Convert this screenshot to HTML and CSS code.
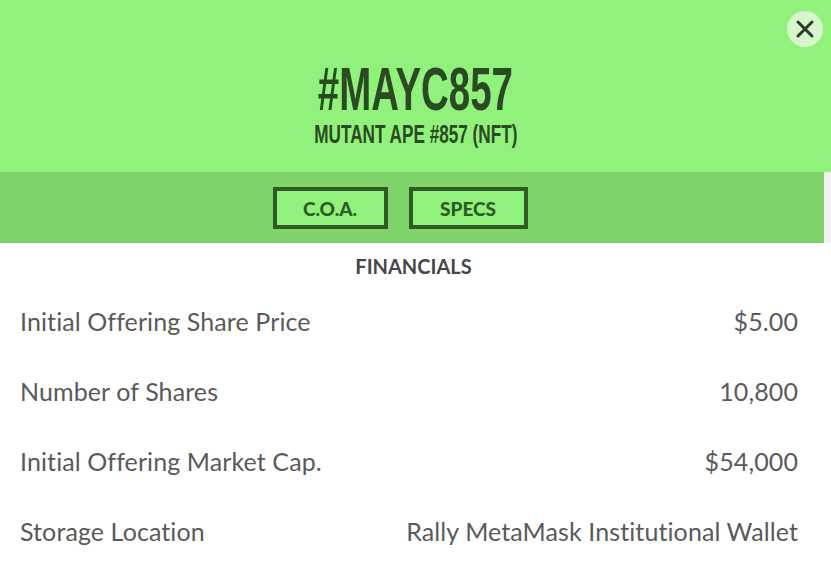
FILE: index.html
```html
<!DOCTYPE html>
<html>
<head>
<meta charset="utf-8">
<link rel="stylesheet" href="styles.css">
</head>
<body>
<div class="modal">
  <header class="hero">
    <h1 class="title"><span>#MAYC857</span></h1>
    <div class="subtitle"><span>MUTANT APE #857 (NFT)</span></div>
    <button class="close" aria-label="Close">
      <svg width="20" height="20" viewBox="0 0 20 20"><path d="M3 3L17 17M17 3L3 17" stroke="#2e3a2b" stroke-width="3" stroke-linecap="round"/></svg>
    </button>
  </header>
  <nav class="tabs">
    <div class="tabbar">
      <button class="tab coa">C.O.A.</button>
      <button class="tab specs">SPECS</button>
    </div>
    <div class="scroll"></div>
  </nav>
  <section class="financials">
    <h2 class="section-title">FINANCIALS</h2>
    <div class="row"><span class="label">Initial Offering Share Price</span><span class="value">$5.00</span></div>
    <div class="row"><span class="label">Number of Shares</span><span class="value">10,800</span></div>
    <div class="row"><span class="label">Initial Offering Market Cap.</span><span class="value">$54,000</span></div>
    <div class="row"><span class="label">Storage Location</span><span class="value">Rally MetaMask Institutional Wallet</span></div>
  </section>
</div>
</body>
</html>
```
FILE: styles.css
```css
html, body { margin: 0; padding: 0; background: #fff; }
body { width: 831px; height: 583px; overflow: hidden; font-family: "Lato", "Liberation Sans", sans-serif; }
.modal { width: 831px; }
.hero {
  position: relative;
  height: 172px;
  background: #90f27a;
  display: flex; flex-direction: column; align-items: center;
  padding-top: 60px; box-sizing: border-box;
  color: #2b4a24;
}
.title { margin: 0; font-family: "Liberation Sans", sans-serif; font-weight: 700; font-size: 62px; line-height: 58px; height: 58px; }
.title span { display: inline-block; transform: scaleX(0.62); transform-origin: center; }
.subtitle { font-family: "Liberation Sans", sans-serif; font-weight: 700; font-size: 26px; line-height: 26px; margin-top: 3px; }
.subtitle span { display: inline-block; transform: scaleX(0.66); }
.close {
  position: absolute; top: 11px; right: 8px;
  width: 36px; height: 36px; border-radius: 50%;
  border: none; background: #d6f6cd; padding: 0;
  display: flex; align-items: center; justify-content: center;
}
.tabs { display: flex; height: 71px; }
.tabbar { flex: 1; background: #7ed36b; display: flex; justify-content: center; align-items: center; gap: 21px; padding-right: 24px; }
.scroll { width: 7px; background: #f0f1f0; }
.tab {
  height: 42px; box-sizing: border-box;
  border: 4px solid #2e5a26; background: #90f27a;
  color: #2e5a26; font-family: "Lato", sans-serif; font-weight: 900; font-size: 19px;
  padding: 0; margin-top: 1px;
}
.coa { width: 115px; }
.specs { width: 119px; }
.financials { padding: 12px 33px 0 20px; color: #5a5a5a; }
.section-title { margin: 0; text-align: center; font-size: 20px; font-weight: 700; color: #474747; line-height: 22px; padding-left: 9px; }
.row { display: flex; justify-content: space-between; align-items: baseline; font-size: 25px; letter-spacing: 0.1px; height: 70px; line-height: 70px; }
.financials .row:nth-child(2) { margin-top: 9px; }
```
